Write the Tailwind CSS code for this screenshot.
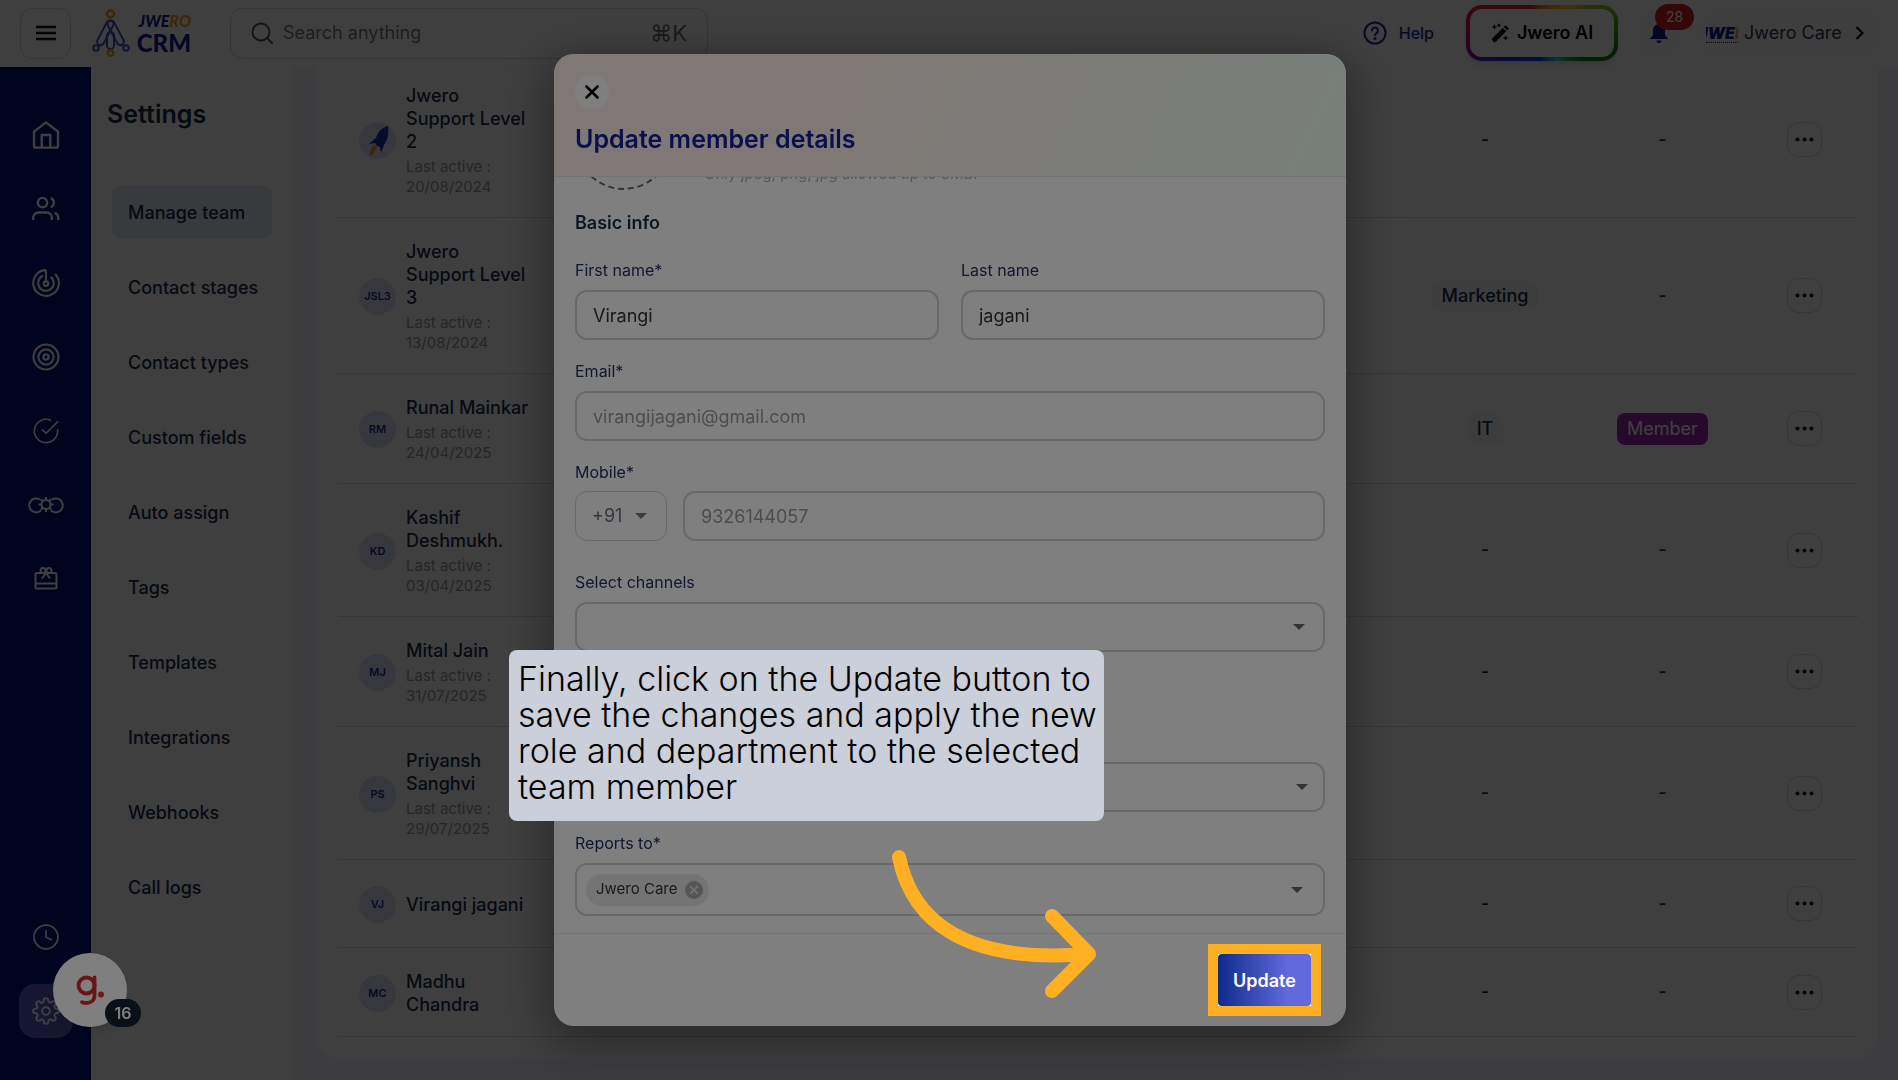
<!DOCTYPE html>
<html lang="en">
<head>
    <meta charset="UTF-8">
    <title>Jwero CRM - Manage team</title>
    <script src="https://cdn.jsdelivr.net/npm/@tailwindcss/browser@4"></script>
</head>
<body class="h-screen overflow-hidden bg-[#f4f4ff] font-['Inter',sans-serif] text-[#172b4d] flex flex-col">

    <!-- Top bar -->
    <header class="h-[67px] shrink-0 bg-white border-b border-gray-100 flex items-center pl-5 pr-5">
        <button aria-label="Toggle menu" class="w-[51px] h-[51px] rounded-xl border border-gray-300 flex items-center justify-center">
            <svg class="w-5 h-5" viewBox="0 0 20 20" stroke="#111" stroke-width="2.4"><path d="M0 4h20M0 10h20M0 16h20"/></svg>
        </button>
        <a href="#" class="ml-5 w-[100px] flex items-center justify-between leading-none">
            <svg class="w-10 h-12" viewBox="0 0 40 48" fill="none" stroke-width="2">
                <g stroke="#4a4ac8">
                    <rect x="-3.500" y="-3.500" width="7" height="27" rx="3.500" transform="translate(19 15) rotate(28)"/>
                    <rect x="-3.500" y="-3.500" width="7" height="27" rx="3.500" transform="translate(20 15) rotate(-28)"/>
                    <rect x="16" y="23" width="7" height="17" rx="3.500"/>
                    <circle cx="5" cy="39" r="2.800"/>
                    <circle cx="35" cy="39" r="2.800"/>
                </g>
                <g stroke="#f0a020" stroke-width="2.400">
                    <circle cx="19.500" cy="5" r="3.500"/>
                    <circle cx="19.500" cy="44" r="2.800"/>
                </g>
            </svg>
            <span class="flex flex-col items-end font-['Lato',sans-serif] font-black text-[#101a8c]">
                <span class="text-base leading-5 italic">JWE<span class="text-[#f0a020]">RO</span></span>
                <span class="text-2xl leading-6">CRM</span>
            </span>
        </a>
        <label class="ml-[39px] w-[478px] h-[51px] rounded-xl border border-gray-300 flex items-center px-5">
            <svg class="w-[22px] h-[22px]" viewBox="0 0 22 22" fill="none" stroke="#4b4b5a" stroke-width="1.8"><circle cx="10" cy="10" r="8.5"/><path d="M16 16l5 5" stroke-linecap="round"/></svg>
            <input type="text" placeholder="Search anything" aria-label="Search anything" class="ml-2.5 flex-1 min-w-0 text-lg outline-none placeholder:text-[#7b7b7b]">
            <span class="text-[22px] text-[#6b6b6b]">⌘K</span>
        </label>
        <div class="ml-auto flex items-center">
            <a href="#" class="flex items-center gap-3 font-medium text-base text-[#1c2a9c]">
                <svg class="w-6 h-6" viewBox="0 0 24 24" fill="none" stroke="currentColor" stroke-width="2"><circle cx="12" cy="12" r="10.5"/><path d="M9 9.5a3 3 0 1 1 4.5 2.6c-1 .6-1.5 1-1.5 2.2" stroke-linecap="round"/><circle cx="12" cy="17.5" r=".6" fill="currentColor"/></svg>
                Help
            </a>
            <div class="ml-8 p-1 rounded-2xl shadow-md bg-[conic-gradient(#f08020_0deg,#f0d020_45deg,#80c020_70deg,#108010_100deg,#108010_122deg,#40d0c0_150deg,#1030f0_185deg,#3020d0_240deg,#901090_255deg,#d01050_275deg,#e02020_295deg,#e02020_335deg,#f08020_360deg)]">
                <button class="h-12 w-36 rounded-xl bg-white flex items-center justify-center gap-2 text-lg font-semibold text-black">
                    <svg class="w-[18px] h-5" viewBox="0 0 16 18"><path d="M1 14L10.500 4.500l3 3L4 17a1 1 0 0 1-1.500 0L1 15.500a1 1 0 0 1 0-1.500z"/><path d="M11.500 3.500l1.500-1.500 3 3-1.500 1.500z"/><path d="M3 1l.8 1.700L5.500 3.500l-1.700.8L3 6l-.8-1.700L.5 3.500l1.700-.8zM7 0l.5 1.300L9 2l-1.500.6L7 4l-.6-1.400L5 2l1.400-.7zM13 11l.8 1.700 1.700.8-1.700.8L13 16l-.8-1.700-1.700-.8 1.700-.8z"/></svg>
                    Jwero AI
                </button>
            </div>
            <button aria-label="Notifications" class="relative ml-5 w-[42px] h-[42px] rounded-xl bg-gray-50 flex items-center justify-center">
                <svg class="w-5 h-5" viewBox="0 0 20 20" fill="#101a8c"><path d="M10 0a1.500 1.500 0 0 1 1.500 1.500A6 6 0 0 1 16 7.500v4.500l3 4H1l3-4V7.500a6 6 0 0 1 4.500-6A1.500 1.500 0 0 1 10 0zM7.500 17.500h5a2.500 2.500 0 0 1-5 0z"/></svg>
                <span class="absolute -top-2 left-[17px] w-[39px] h-[26px] rounded-full bg-[#d32020] text-white text-sm flex items-center justify-center">28</span>
            </button>
            <button class="ml-[21px] h-[42px] w-[177px] rounded-xl bg-gray-50 flex items-center pl-[5px] text-lg text-[#2a3a5c]">
                <span class="w-8 overflow-hidden flex justify-center border-b border-dotted border-[#222] font-black italic text-base leading-[18px] text-[#101a8c]">JWE<span class="text-[#f0a020]">R</span></span>
                <span class="ml-1.5">Jwero Care</span>
                <svg class="ml-auto mr-3.5 w-[9px] h-3.5" viewBox="0 0 8 14" fill="none" stroke="#111" stroke-width="2.2"><path d="M1 1l6 6-6 6"/></svg>
            </button>
        </div>
    </header>

    <div class="flex-1 min-h-0 flex">
        <!-- Icon rail -->
        <nav class="w-[91px] shrink-0 bg-[#001078] text-white flex flex-col items-center justify-between pt-[41px] pb-[42px]">
            <div class="flex flex-col gap-5">
                <a href="#" aria-label="Home" class="size-[54px] flex items-center justify-center">
                    <svg class="w-8 h-8" viewBox="0 0 24 24" fill="none" stroke="currentColor" stroke-width="1.8" stroke-linejoin="round"><path d="M3 9.500L12 2.500l9 7V20a1.500 1.500 0 0 1-1.500 1.500h-15A1.500 1.500 0 0 1 3 20z"/><path d="M8.800 21.500v-9.500h6.400v9.500"/></svg>
                </a>
                <a href="#" aria-label="Contacts" class="size-[54px] flex items-center justify-center">
                    <svg class="w-7 h-7" viewBox="0 0 24 24" fill="none" stroke="currentColor" stroke-width="2"><circle cx="9" cy="6.500" r="4"/><path d="M1 21.500v-2a4.500 4.500 0 0 1 4.500-4.500h7a4.500 4.500 0 0 1 4.500 4.500v2M16 2.700a4 4 0 0 1 0 7.600M19.500 15.300a4.500 4.500 0 0 1 3 4.200v2"/></svg>
                </a>
                <a href="#" aria-label="Leads" class="size-[54px] flex items-center justify-center">
                    <svg class="w-7 h-7" viewBox="0 0 24 24" fill="none" stroke="currentColor" stroke-width="1.800"><path d="M12 1v11M12 1a11 11 0 1 0 7.800 3.200"/><path d="M9.500 5.800a6.700 6.700 0 1 0 6.500.9"/><circle cx="12" cy="12.500" r="2"/></svg>
                </a>
                <a href="#" aria-label="Targets" class="size-[54px] flex items-center justify-center">
                    <svg class="w-7 h-7" viewBox="0 0 24 24" fill="none" stroke="currentColor" stroke-width="1.800"><circle cx="12" cy="12" r="10.700"/><circle cx="12" cy="12" r="6.500"/><circle cx="12" cy="12" r="2.300"/></svg>
                </a>
                <a href="#" aria-label="Tasks" class="size-[54px] flex items-center justify-center">
                    <svg class="w-7 h-7" viewBox="0 0 24 24" fill="none" stroke="currentColor" stroke-width="1.400" stroke-linecap="round"><path d="M22 11v1a10 10 0 1 1-6-9.200"/><path d="M22 4L12 14l-3-3"/></svg>
                </a>
                <a href="#" aria-label="Integrations" class="size-[54px] flex items-center justify-center">
                    <svg class="w-9 h-[18px]" viewBox="0 0 36 18" fill="none" stroke="currentColor" stroke-width="2"><path d="M12 3.500A7 7 0 1 0 13 14.500M24 3.500A7 7 0 1 1 23 14.500"/><circle cx="18" cy="8.500" r="4.500"/><path d="M18 1v3M18 13v3M10.500 8.500h3M22.500 8.500h3M12.700 3.200l2.100 2.100M21.200 11.700l2.100 2.100M12.700 13.800l2.100-2.100M21.200 5.300l2.100-2.100"/></svg>
                </a>
                <a href="#" aria-label="Rewards" class="size-[54px] flex items-center justify-center">
                    <svg class="w-6 h-6" viewBox="0 0 24 24" fill="none" stroke="currentColor" stroke-width="2" stroke-linejoin="round"><rect x="1.500" y="6" width="21" height="15.500" rx="1.500"/><path d="M1.500 16.500h21M12 6L8 11.500M12 6l4 5.500"/><circle cx="9" cy="3.500" r="2.500"/><circle cx="15" cy="3.500" r="2.500"/></svg>
                </a>
            </div>
            <div class="flex flex-col gap-5">
                <a href="#" aria-label="History" class="size-[54px] flex items-center justify-center">
                    <svg class="w-[26px] h-[26px]" viewBox="0 0 24 24" fill="none" stroke="currentColor" stroke-width="1.600" stroke-linecap="round"><circle cx="12" cy="12" r="11"/><path d="M12 6v6l5 2.500"/></svg>
                </a>
                <a href="#" aria-label="Settings" class="size-[54px] rounded-2xl bg-[#5a5ac0] flex items-center justify-center">
                    <svg class="w-7 h-7" viewBox="0 0 24 24" fill="none" stroke="currentColor" stroke-width="1.700" stroke-linejoin="round"><circle cx="12" cy="12" r="3.300"/><path d="M19.400 15a1.650 1.650 0 0 0 .33 1.820l.06.060a2 2 0 1 1-2.830 2.830l-.060-.060a1.650 1.650 0 0 0-2.800 1.170V21a2 2 0 0 1-4 0v-.090A1.650 1.650 0 0 0 9 19.400a1.650 1.650 0 0 0-1.820.33l-.060.060a2 2 0 1 1-2.830-2.830l.060-.060A1.650 1.650 0 0 0 3.170 14H3a2 2 0 0 1 0-4h.090A1.650 1.650 0 0 0 4.600 9a1.650 1.650 0 0 0-.33-1.820l-.060-.060a2 2 0 1 1 2.830-2.830l.060.060A1.650 1.650 0 0 0 10 3.170V3a2 2 0 0 1 4 0v.090a1.650 1.650 0 0 0 2.820 1.180l.060-.060a2 2 0 1 1 2.830 2.830l-.060.060A1.650 1.650 0 0 0 20.830 10H21a2 2 0 0 1 0 4h-.090a1.650 1.650 0 0 0-1.510 1z"/></svg>
                </a>
            </div>
        </nav>

        <!-- Settings menu -->
        <aside class="w-[203px] shrink-0 bg-white border-r border-gray-50">
            <h1 class="h-24 flex items-center pl-4 text-[25px] font-semibold border-b border-gray-100">Settings</h1>
            <nav id="settingsMenu" class="pt-[22px] px-[21px] flex flex-col gap-[21px]"></nav>
        </aside>

        <!-- Team list -->
        <main class="flex-1 min-w-0 pl-[22px] pr-5 pb-[21px]">
            <section class="h-full overflow-hidden bg-white rounded-b-3xl pl-[22px] pr-5">
                <table class="w-full -mt-[5px] table-fixed border-separate border-spacing-0">
                    <colgroup>
                        <col class="w-[220px]">
                        <col>
                        <col class="w-[178px]">
                        <col class="w-[177px]">
                        <col class="w-[107px]">
                    </colgroup>
                    <tbody id="teamRows"></tbody>
                </table>
            </section>
        </main>
    </div>

    <div class="fixed inset-0 bg-black/50"></div>

    <!-- Guide widget -->
    <button aria-label="Open guide" class="fixed left-[53px] bottom-[53px] size-[74px] rounded-full bg-white shadow-lg flex items-center justify-center">
        <svg class="w-7 h-[30px]" viewBox="0 0 28 30" fill="none" stroke="#d42a2a" stroke-width="3.800" stroke-linecap="round"><circle cx="10.500" cy="10.500" r="8"/><path d="M18.500 2.500v18c0 5-4 7.500-8 7.500-2 0-3-.3-4.500-.8"/><circle cx="25" cy="19.500" r="1" fill="#d42a2a"/></svg>
        <span class="absolute left-[52px] top-[46px] w-9 h-7 rounded-full bg-[#14202e] text-white text-base font-semibold flex items-center justify-center">16</span>
    </button>

    <!-- Update member dialog -->
    <div class="fixed inset-0 flex justify-center pt-[54px] pb-[54px]">
        <div role="dialog" aria-labelledby="dialogTitle" class="w-[792px] ml-[2px] max-w-full flex flex-col bg-white rounded-[20px] shadow-[0_12px_44px_8px_rgba(0,0,0,0.35)]">
            <div class="h-[123px] shrink-0 rounded-t-[20px] border-b border-[#ece4e2] bg-linear-[115deg,#fff0ec_0%,#fff1ec_35%,#f9f8f0_65%,#f0fff6_100%] px-[21px] pt-[21px]">
                <button aria-label="Close" class="size-[34px] rounded-full bg-white flex items-center justify-center">
                    <svg class="w-3.5 h-3.5" viewBox="0 0 14 14" stroke="#000" stroke-width="2.600" stroke-linecap="round"><path d="M1.500 1.500l11 11M12.500 1.500l-11 11"/></svg>
                </button>
                <h2 id="dialogTitle" class="mt-[14px] text-[25px] leading-8 font-semibold text-[#14209c]">Update member details</h2>
            </div>
            <form class="flex-1 min-h-0 overflow-hidden px-[21px] text-[#242f5c]">
                <div class="-mt-[84px] flex items-end">
                    <div class="size-[97px] rounded-full border-2 border-dashed border-[#666] bg-gray-50"></div>
                    <p class="ml-8 mb-1.5 text-[15px] leading-5 text-[#b0b0b0]">Only jpeg, png, jpg allowed up to 5MB.</p>
                </div>
                <h3 class="mt-[21px] text-lg leading-6 font-semibold text-[#172b4d]">Basic info</h3>
                <div class="mt-6 grid grid-cols-2 gap-[22px]">
                    <div>
                        <label for="firstName" class="block text-base leading-[22px]">First name*</label>
                        <input id="firstName" type="text" value="Virangi" class="mt-[9px] w-full h-[50px] rounded-xl border-2 border-[#d2d2d2] px-4 text-lg text-[#333]">
                    </div>
                    <div>
                        <label for="lastName" class="block text-base leading-[22px]">Last name</label>
                        <input id="lastName" type="text" value="jagani" class="mt-[9px] w-full h-[50px] rounded-xl border-2 border-[#d2d2d2] px-4 text-lg text-[#333]">
                    </div>
                </div>
                <label for="email" class="mt-5 block text-base leading-[22px]">Email*</label>
                <input id="email" type="email" value="virangijagani@gmail.com" disabled class="mt-[9px] block w-full h-[50px] rounded-xl border-2 border-[#d2d2d2] px-4 text-lg text-[#9a9a9a]">
                <label for="mobile" class="mt-5 block text-base leading-[22px]">Mobile*</label>
                <div class="mt-2 flex gap-4">
                    <div class="relative">
                        <select aria-label="Country code" class="w-[92px] h-[50px] appearance-none rounded-xl border border-[#d2d2d2] px-4 text-lg text-[#6a6f80]"><option>+91</option></select>
                        <svg class="absolute right-5 top-[22px] w-3 h-1.5 pointer-events-none" viewBox="0 0 12 6" fill="#777"><path d="M0 0h12L6 6z"/></svg>
                    </div>
                    <input id="mobile" type="tel" value="9326144057" disabled class="flex-1 h-[50px] rounded-xl border-2 border-[#d2d2d2] px-4 text-lg text-[#9a9a9a]">
                </div>
                <label for="channels" class="mt-[30px] block text-base leading-[22px]">Select channels</label>
                <div class="relative mt-[9px]">
                    <select id="channels" class="block w-full h-[50px] appearance-none rounded-xl border-2 border-[#d2d2d2] px-4 text-lg"><option></option></select>
                    <svg class="absolute right-5 top-[22px] w-3 h-1.5 pointer-events-none" viewBox="0 0 12 6" fill="#666"><path d="M0 0h12L6 6z"/></svg>
                </div>
                <div class="relative mt-[110px]">
                    <select aria-label="Role" class="block w-full h-[50px] appearance-none rounded-xl border-2 border-[#d2d2d2] px-4 text-lg"><option></option></select>
                    <svg class="absolute right-[17px] top-[22px] w-3 h-1.5 pointer-events-none" viewBox="0 0 12 6" fill="#666"><path d="M0 0h12L6 6z"/></svg>
                </div>
                <label for="reportsTo" class="mt-5 block text-base leading-[22px]">Reports to*</label>
                <div class="mt-[9px] h-[53px] rounded-xl border-2 border-[#d2d2d2] flex items-center pl-[9px] pr-5">
                    <span class="h-8 rounded-full bg-[#e8e8e8] flex items-center gap-2 pl-2.5 pr-1.5 text-[15px] text-[#333]">
                        Jwero Care
                        <button type="button" aria-label="Remove Jwero Care" class="size-[18px] rounded-full bg-[#ababab] flex items-center justify-center">
                            <svg class="w-2 h-2" viewBox="0 0 8 8" stroke="#e8e8e8" stroke-width="1.600"><path d="M0 0l8 8M8 0L0 8"/></svg>
                        </button>
                    </span>
                    <input id="reportsTo" type="text" class="flex-1 min-w-0 px-2 outline-none">
                    <svg class="w-3 h-1.5" viewBox="0 0 12 6" fill="#666"><path d="M0 0h12L6 6z"/></svg>
                </div>
            </form>
            <div class="h-[93px] shrink-0 border-t border-gray-200 flex justify-end pt-[10px] pr-[25px]">
                <!-- spotlight: the spread shadow dims everything outside the frame -->
                <div class="relative h-[72px] w-[113px] border-[10px] border-[#ffb022] bg-white shadow-[0_0_0_3000px_rgba(0,0,0,0.5)]">
                    <button class="w-full h-full pt-0.5 rounded-sm bg-linear-to-r from-[#0c2a8c] to-[#6169dc] to-75% text-white text-lg font-semibold">Update</button>
                </div>
            </div>
        </div>
    </div>

    <!-- Walkthrough step -->
    <p class="fixed left-[509px] top-[650px] w-[595px] h-[171px] rounded-lg bg-[#cbcfd9] pl-[9px] pt-[11px] text-[34px] leading-9 font-light text-black whitespace-nowrap">Finally, click on the Update button to<br>save the changes and apply the new<br>role and department to the selected<br>team member</p>
    <svg class="fixed left-[880px] top-[840px] w-[230px] h-[170px] pointer-events-none" viewBox="0 0 230 170" fill="none" stroke="#ffb022" stroke-width="14" stroke-linecap="round" stroke-linejoin="round">
        <path d="M19 17C32 81 85 124 208 114"/>
        <path d="M172 76l37 38-37 37"/>
    </svg>

    <script>
        const menuItems = ['Manage team', 'Contact stages', 'Contact types', 'Custom fields', 'Auto assign', 'Tags', 'Templates', 'Integrations', 'Webhooks', 'Call logs'];

        const members = [
            { initials: '', name: 'Jwero Support Level 2', active: '20/08/2024' },
            { initials: 'JSL3', name: 'Jwero Support Level 3', active: '13/08/2024', dept: 'Marketing' },
            { initials: 'RM', name: 'Runal Mainkar', active: '24/04/2025', dept: 'IT', role: 'Member' },
            { initials: 'KD', name: 'Kashif Deshmukh.', active: '03/04/2025' },
            { initials: 'MJ', name: 'Mital Jain', active: '31/07/2025' },
            { initials: 'PS', name: 'Priyansh Sanghvi', active: '29/07/2025' },
            { initials: 'VJ', name: 'Virangi jagani' },
            { initials: 'MC', name: 'Madhu Chandra' }
        ];

        const rocket = `<svg class="w-[22px] h-8" viewBox="0 0 22 32"><path d="M21 1c-7 2-10 6-12 12l-7 6 6-1 2 3 3 1 1 6 3-8c4-6 5-12 4-19z" fill="#1c2cb0"/><path d="M7 20c-3 2-4 6-4 11 4-2 6-5 7-10z" fill="#e8a020"/></svg>`;

        document.getElementById('settingsMenu').innerHTML = menuItems.map((item, i) => `
            <a href="#" class="h-[54px] flex items-center pl-4 pt-0.5 rounded-xl text-lg font-medium whitespace-nowrap ${i === 0 ? 'bg-[#e6e8fb]' : ''}">${item}</a>
        `).join('');

        document.getElementById('teamRows').innerHTML = members.map(m => `
            <tr class="h-[88px]">
                <td class="border-b border-[#d8d8d8] pt-[22px] pb-[20px] pl-[21px]">
                    <div class="flex items-center gap-2.5">
                        <span class="size-[37px] shrink-0 rounded-full bg-[#dfe2f8] flex items-center justify-center text-[11px] font-semibold text-[#1f1f90]">${m.initials || rocket}</span>
                        <div class="w-[126px]">
                            <div class="text-lg leading-[23px] font-medium">${m.name}</div>
                            ${m.active ? `<div class="mt-1 text-[15px] leading-5 text-[#999]">Last active :<br>${m.active}</div>` : ''}
                        </div>
                    </div>
                </td>
                <td class="border-b border-[#d8d8d8]"></td>
                <td class="border-b border-[#d8d8d8] text-center text-lg font-medium">${m.dept ? `<span class="inline-block rounded-lg bg-[#f4f4f8] px-2.5 leading-[30px]">${m.dept}</span>` : '-'}</td>
                <td class="border-b border-[#d8d8d8] text-center text-lg font-medium">${m.role ? `<span class="inline-block rounded-lg bg-[#9c27b0] px-2.5 leading-8 font-normal text-white">${m.role}</span>` : '-'}</td>
                <td class="border-b border-[#d8d8d8]">
                    <button aria-label="More actions" class="mx-auto size-[35px] rounded-xl border border-gray-300 flex items-center justify-center">
                        <svg class="w-[19px] h-[5px]" viewBox="0 0 19 5"><circle cx="2.500" cy="2.500" r="2"/><circle cx="9.500" cy="2.500" r="2"/><circle cx="16.500" cy="2.500" r="2"/></svg>
                    </button>
                </td>
            </tr>
        `).join('');
    </script>
</body>
</html>
